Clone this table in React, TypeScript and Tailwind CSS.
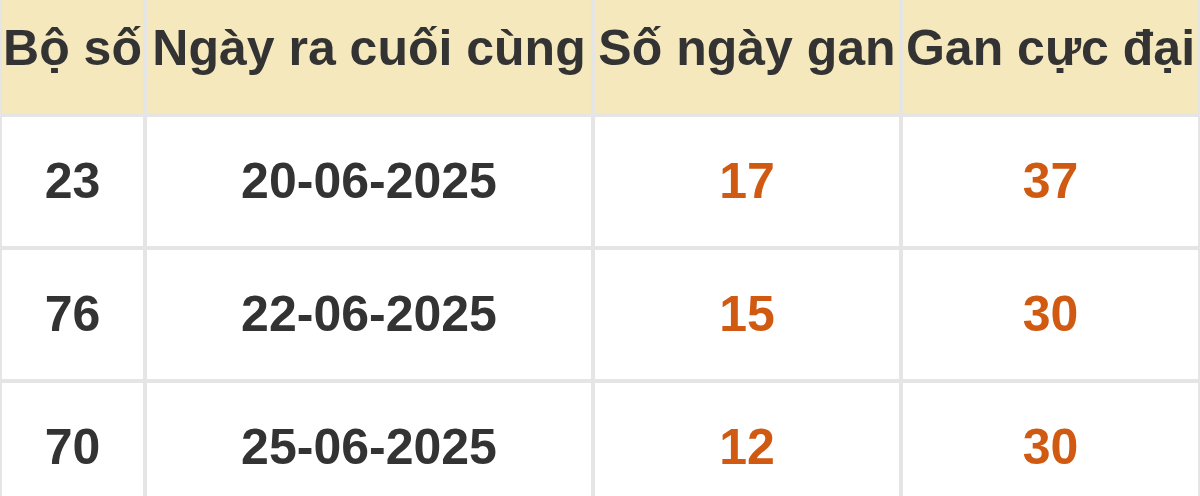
import * as React from 'react';

const headers = ['Bộ số', 'Ngày ra cuối cùng', 'Số ngày gan', 'Gan cực đại'];

const rows = [
    { set: '23', date: '20-06-2025', days: '17', max: '37' },
    { set: '76', date: '22-06-2025', days: '15', max: '30' },
    { set: '70', date: '25-06-2025', days: '12', max: '30' },
];

const cell = 'flex items-center justify-center whitespace-nowrap bg-white h-[129px]';

export default function App() {
    return (
        <div
            className="w-[1200px] h-[496px] overflow-hidden bg-[#e5e5e5] px-[2px] text-[50px] font-bold text-[#333333]"
            style={{ fontFamily: '"Liberation Sans", Arial, sans-serif' }}
        >
            <div className="grid grid-cols-[141px_444px_304px_295px] gap-[4px]">
                {headers.map((h) => (
                    <div
                        key={h}
                        className="flex items-center justify-center whitespace-nowrap bg-[#f6e8bd] h-[113px] pb-[16px]"
                    >
                        {h}
                    </div>
                ))}
                {rows.map((r) => (
                    <React.Fragment key={r.set}>
                        <div className={cell}>{r.set}</div>
                        <div className={cell}>{r.date}</div>
                        <div className={`${cell} text-[#d05a12]`}>{r.days}</div>
                        <div className={`${cell} text-[#d05a12]`}>{r.max}</div>
                    </React.Fragment>
                ))}
            </div>
        </div>
    );
}
